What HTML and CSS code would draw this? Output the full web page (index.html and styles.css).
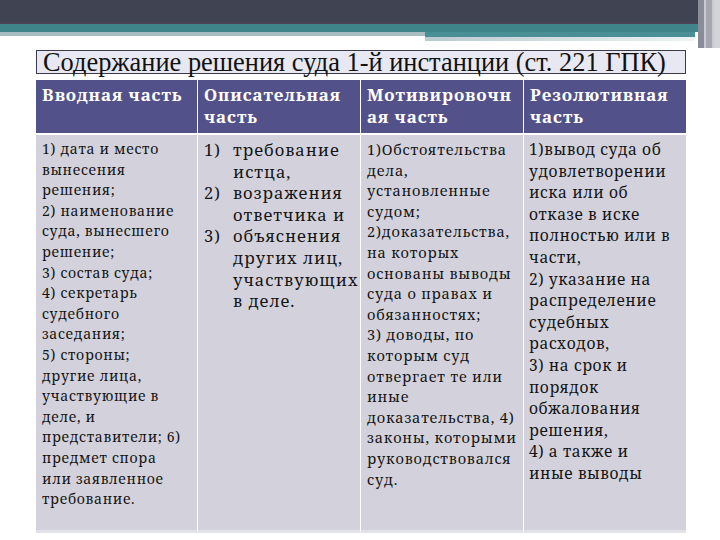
FILE: index.html
```html
<!DOCTYPE html>
<html lang="ru">
<head>
<meta charset="utf-8">
<link rel="stylesheet" href="styles.css">
</head>
<body>
<div class="deco">
  <div class="bar-dark"></div>
  <div class="bar-line"></div>
  <div class="bar-teal"></div>
  <div class="bar-split">
    <div class="split-left"></div>
    <div class="split-right">
      <div class="sr-teal"></div>
      <div class="sr-light"></div>
    </div>
  </div>
  <div class="stripes"><span></span><span></span><span></span></div>
</div>
<div class="slide">
  <h1 class="title">Содержание решения суда 1-й инстанции (ст. 221 ГПК)</h1>
  <div class="table">
    <div class="th">Вводная часть</div>
    <div class="th">Описательная<br>часть</div>
    <div class="th">Мотивировочн<br>ая часть</div>
    <div class="th">Резолютивная<br>часть</div>

    <div class="td c1">1) дата и место<br>вынесения<br>решения;<br>2) наименование<br>суда, вынесшего<br>решение;<br>3) состав суда;<br>4) секретарь<br>судебного<br>заседания;<br>5) стороны;<br>другие лица,<br>участвующие в<br>деле, и<br>представители; 6)<br>предмет спора<br>или заявленное<br>требование.</div>
    <div class="td c2">
      <ol class="list">
        <li><span class="num">1)</span><span>требование<br>истца,</span></li>
        <li><span class="num">2)</span><span>возражения<br>ответчика и</span></li>
        <li><span class="num">3)</span><span>объяснения<br>других лиц,<br>участвующих<br>в деле.</span></li>
      </ol>
    </div>
    <div class="td c3">1)Обстоятельства<br>дела,<br>установленные<br>судом;<br>2)доказательства,<br>на которых<br>основаны выводы<br>суда о правах и<br>обязанностях;<br>3) доводы, по<br>которым суд<br>отвергает те или<br>иные<br>доказательства, 4)<br>законы, которыми<br>руководствовался<br>суд.</div>
    <div class="td c4">1)вывод суда об<br>удовлетворении<br>иска или об<br>отказе в иске<br>полностью или в<br>части,<br>2) указание на<br>распределение<br>судебных<br>расходов,<br>3) на срок и<br>порядок<br>обжалования<br>решения,<br>4) а также и<br>иные выводы</div>
  </div>
</div>
</body>
</html>
```

FILE: styles.css
```css
html, body {
  margin: 0;
  padding: 0;
  background: #ffffff;
  width: 720px;
  height: 540px;
  overflow: hidden;
}

.deco {
  position: relative;
  height: 46px;
}
.bar-dark {
  height: 22px;
  background: #404352;
}
.bar-line {
  height: 2px;
  background: #4b4258;
}
.bar-teal {
  height: 8px;
  background: #3e8489;
}
.bar-split {
  display: flex;
}
.split-left {
  width: 425px;
  height: 4px;
  background: #a8bcc2;
}
.split-right {
  width: 270px;
}
.sr-teal {
  height: 5px;
  background: #4a8f95;
}
.sr-light {
  height: 4px;
  background: linear-gradient(to right, #b9cbcf 0%, #d8e2e4 60%, #eef3f4 100%);
}
.stripes {
  position: absolute;
  top: 0;
  right: 0;
  width: 22px;
  height: 48px;
  display: flex;
}
.stripes span {
  flex: 1;
  background: #8a8c98;
  border-right: 2px solid #c9cbd2;
}
.stripes span:nth-child(2) { background: #a4a6b0; }
.stripes span:nth-child(3) { background: #d2d4da; border-right: none; }

.slide {
  padding: 4px 0 0 36px;
}

.title {
  width: 650px;
  height: 24px;
  box-sizing: border-box;
  margin: 0;
  border: 1px solid #3a3a4a;
  background: #e8e8f2;
  font-family: "Liberation Serif", serif;
  font-weight: normal;
  font-size: 26.4px;
  line-height: 22px;
  padding-left: 6px;
  color: #111111;
  white-space: nowrap;
}

.table {
  margin-top: 6px;
  width: 650px;
  display: grid;
  grid-template-columns: 161px 163px 163px 163px;
  grid-template-rows: 53px 398px;
  row-gap: 2px;
}

.th {
  background: #53518a;
  color: #ffffff;
  font-family: "Noto Serif", "Liberation Serif", serif;
  font-weight: bold;
  font-size: 17px;
  letter-spacing: 0.9px;
  line-height: 22px;
  padding: 4px 0 0 6px;
  white-space: nowrap;
  border-left: 1px solid #ffffff;
}
.th:first-child { border-left: none; }

.td {
  background: #d3d2dc;
  color: #141414;
  font-family: "Noto Serif", "Liberation Serif", serif;
  white-space: nowrap;
  border-left: 1px solid #ffffff;
  border-bottom: 3px solid #e2e2ea;
}
.td.c1 { border-left: none; }

.c1 {
  font-size: 14px;
  line-height: 20.6px;
  letter-spacing: 0.7px;
  padding: 4px 0 0 6px;
}
.c3 {
  font-size: 14.5px;
  line-height: 20.6px;
  letter-spacing: 0.8px;
  padding: 4px 0 0 6px;
}

.c2 {
  font-size: 16.5px;
  line-height: 21.6px;
  letter-spacing: 1px;
  padding: 4px 0 0 6px;
}
.list {
  margin: 0;
  padding: 0;
  list-style: none;
}
.list li {
  display: flex;
}
.list .num {
  width: 29px;
  flex: none;
}

.c4 {
  font-size: 15.5px;
  line-height: 21.6px;
  letter-spacing: 0.6px;
  padding: 4px 0 0 5px;
}
```
